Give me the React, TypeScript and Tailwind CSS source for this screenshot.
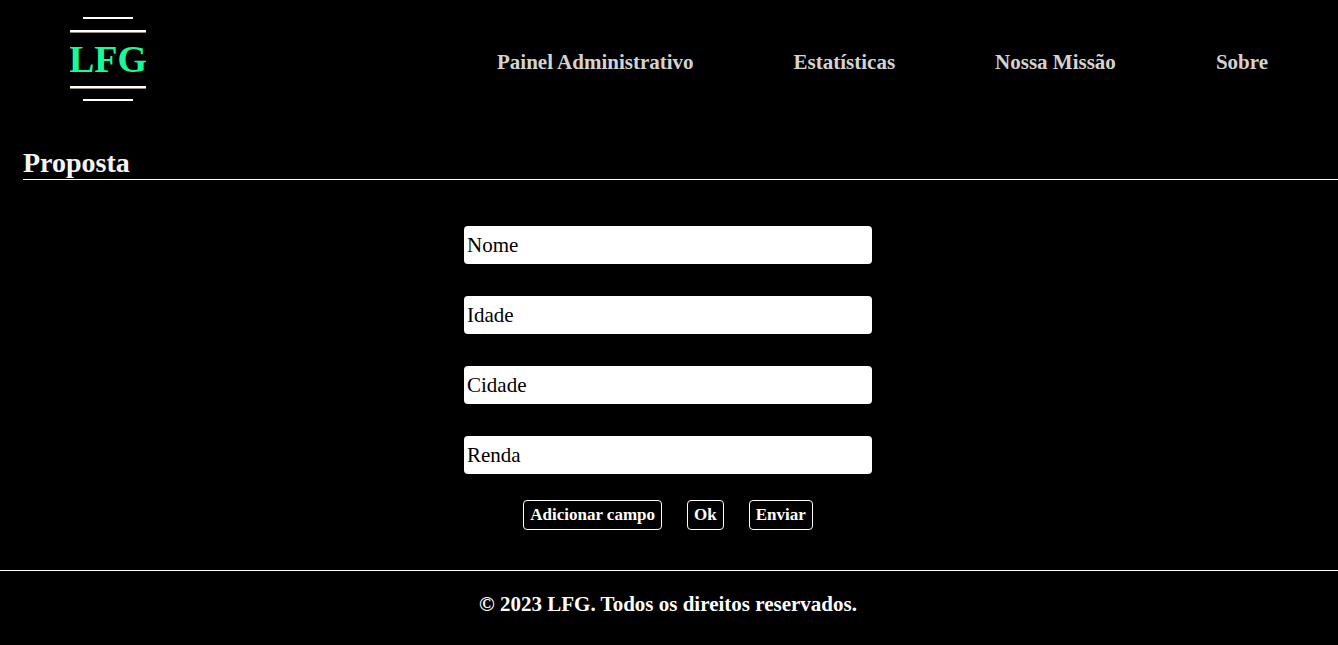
const links = ["Painel Administrativo", "Estatísticas", "Nossa Missão", "Sobre"];
const fields = ["Nome", "Idade", "Cidade", "Renda"];
const actions = ["Adicionar campo", "Ok", "Enviar"];

function Logo() {
  return (
    <svg width="76" height="86" viewBox="0 0 76 86" role="img" aria-label="LFG">
      <path d="M13 2h50M13 84h50" stroke="#fff" strokeWidth="2" />
      <path d="M0 15h76M0 71h76" stroke="#fff" strokeWidth="2" />
      <path d="M0 16.5h76M0 72.5h76" stroke="#938b7c" strokeWidth="1" />
      <text
        x="38"
        y="56"
        textAnchor="middle"
        fill="#19fb9b"
        className="font-['Liberation_Serif',serif] text-[38px] font-bold"
      >
        LFG
      </text>
    </svg>
  );
}

export default function App() {
  return (
    <div className="flex min-h-screen flex-col bg-black font-['Liberation_Serif',serif] font-bold text-white">
      <header className="flex items-start justify-between px-[70px] pt-4">
        <a href="#inicio">
          <Logo />
        </a>
        <nav className="flex gap-[100px] pt-8 text-[21px] leading-7 text-[#d3d3d3]">
          {links.map((link) => (
            <a key={link} href="#" className="whitespace-nowrap">
              {link}
            </a>
          ))}
        </nav>
      </header>

      <main className="flex flex-col pt-[45px]">
        <h1 className="ml-[23px] border-b border-white text-[28px] leading-8 text-[#f5f5f5]">Proposta</h1>
        <form className="flex flex-col items-center pt-[46px] pr-0.5" onSubmit={(e) => e.preventDefault()}>
          <div className="flex w-full max-w-[408px] flex-col gap-8">
            {fields.map((field) => (
              <input
                key={field}
                type="text"
                aria-label={field}
                placeholder={field}
                className="h-[38px] w-full rounded bg-white px-[3px] text-[21px] font-normal text-black placeholder:text-black"
              />
            ))}
          </div>
          <div className="flex gap-[25px] pt-[26px]">
            {actions.map((action) => (
              <button
                key={action}
                type="button"
                className="h-[30px] rounded border border-white px-[6px] text-[17px] leading-7"
              >
                {action}
              </button>
            ))}
          </div>
        </form>
      </main>

      <footer className="mt-10 border-t border-white pt-[19px] pr-0.5 text-center text-[21px] leading-7">
        <p>© 2023 LFG. Todos os direitos reservados.</p>
      </footer>
    </div>
  );
}
